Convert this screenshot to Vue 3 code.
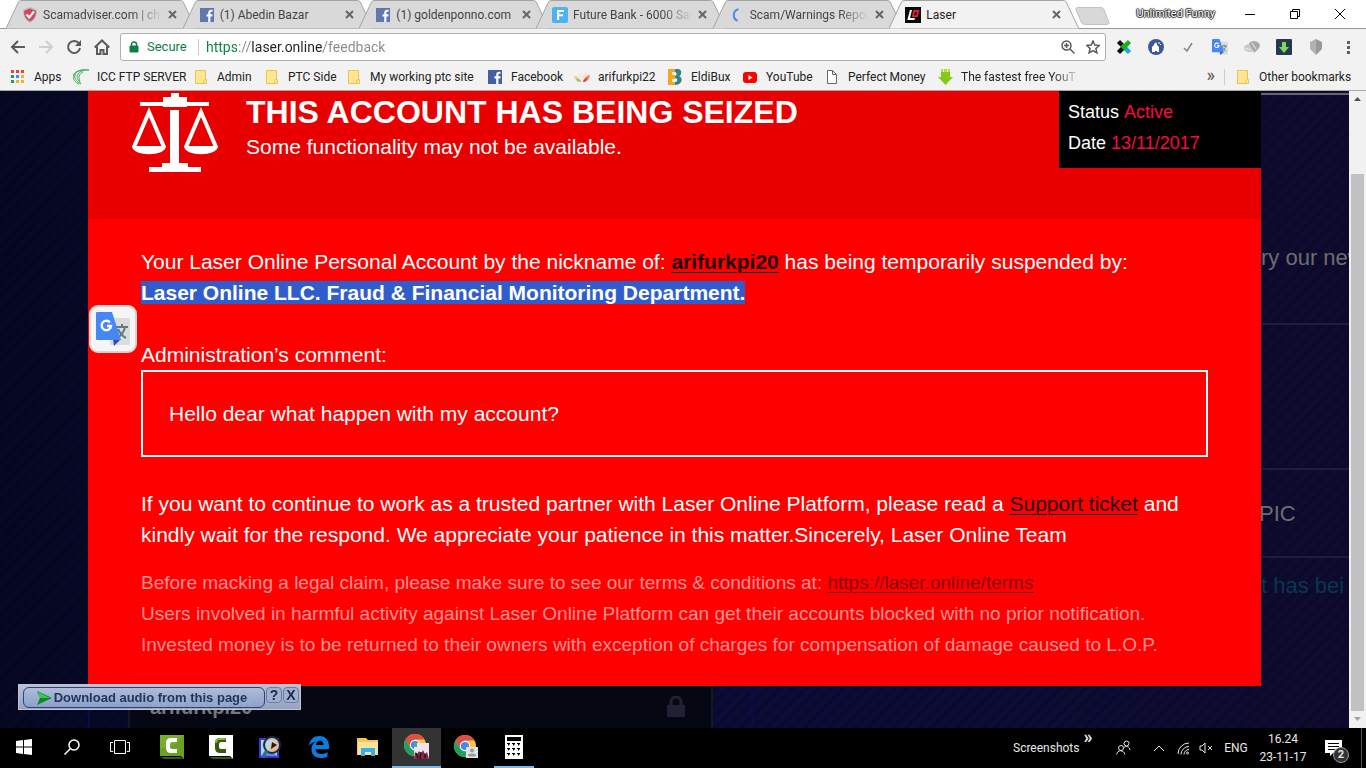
<script setup>
import { ref } from 'vue'

const address = ref('https://laser.online/feedback')

const tabs = [
  { icon: 'shield', title: 'Scamadviser.com | check', fade: true },
  { icon: 'facebook', title: '(1) Abedin Bazar' },
  { icon: 'facebook', title: '(1) goldenponno.com' },
  { icon: 'future', title: 'Future Bank - 6000 Sato', fade: true },
  { icon: 'loading', title: 'Scam/Warnings Report', fade: true },
  { icon: 'laser', title: 'Laser', active: true },
]

const bookmarks = [
  { icon: 'apps', title: 'Apps' },
  { icon: 'icc', title: 'ICC FTP SERVER' },
  { icon: 'folder', title: 'Admin' },
  { icon: 'folder', title: 'PTC Side' },
  { icon: 'folder', title: 'My working ptc site' },
  { icon: 'facebook', title: 'Facebook' },
  { icon: 'hands', title: 'arifurkpi22' },
  { icon: 'eldi', title: 'EldiBux' },
  { icon: 'youtube', title: 'YouTube' },
  { icon: 'page', title: 'Perfect Money' },
  { icon: 'arrow', title: 'The fastest free YouTu', fade: true },
]
</script>

<template>
  <div class="screen">
    <svg class="sprite" aria-hidden="true">
      <symbol id="shield" viewBox="0 0 16 16">
        <path d="M8 0 15 3C15 9 13 13 8 16 3 13 1 9 1 3Z" fill="#b9b3b3" />
        <path d="M8 1.500 14 4C14 9 12 12.500 8 14.600 4 12.500 2 9 2 4Z" fill="#d2233c" />
        <path d="m4.500 7.500 2.700 3L12 4.500" fill="none" stroke="#fff" stroke-width="2.200" />
      </symbol>
      <symbol id="facebook" viewBox="0 0 16 16">
        <path d="M1 1h14v14H1z" fill="#4460a0" />
        <path d="M9.200 15V9.400H7.500V7.200h1.700V5.700c0-2 1.100-3 2.900-3h1.500v2h-1.100c-.9 0-1.100.5-1.100 1.200v1.300h2.200l-.3 2.200h-1.900V15z" fill="#fff" />
      </symbol>
      <symbol id="future" viewBox="0 0 16 16">
        <rect width="16" height="16" rx="2" fill="#2aaaf5" />
        <path d="M5 3h7v2H7.200v2.200h4v2h-4V13H5z" fill="#fff" />
      </symbol>
      <symbol id="loading" viewBox="0 0 16 16">
        <path d="M9.500 2.300A6 6 0 0 0 8.700 13.800" fill="none" stroke="#2a75f0" stroke-width="2" />
      </symbol>
      <symbol id="laser" viewBox="0 0 16 16">
        <path d="M0 0h16v16H0z" fill="#080808" />
        <path d="M5 3h2L5 11h5l-.6 2H2.300z" fill="#fff" />
        <path d="M8.500 3h6l-1.800 7H6.800zm1.500 2-.9 3.200h2.200l.8-3.200z" fill="#e01f35" fill-rule="evenodd" />
      </symbol>
      <symbol id="apps" viewBox="0 0 16 16">
        <path d="M1 1h3v3H1zM6 1h3v3H6zM11 1h3v3h-3z" fill="#ee4135" />
        <path d="M1 6h3v3H1zM1 11h3v3H1z" fill="#219b59" />
        <path d="M6 6h3v3H6z" fill="#4285f4" />
        <path d="M11 6h3v3h-3zM6 11h3v3H6zM11 11h3v3h-3z" fill="#f5b51a" />
      </symbol>
      <symbol id="icc" viewBox="0 0 16 16">
        <path d="M16 1C9 0 3 2 2 6c-1 4 2 7 6 9C5 11 3 8 5 5c2-3 6-4 11-4M12 1C6 1 0 3 0 8c0 3 3 6 6 7M9 1C4 2 0 4 1 9M7 13C5 8 6 5 10 3" fill="none" stroke="#4bb45b" stroke-width="1" />
      </symbol>
      <symbol id="folder" viewBox="0 0 16 16">
        <path d="M2.500 1.500h10v9h1v4h-11z" fill="#ffe694" stroke="#e9c550" />
        <path d="M10.500 14.500v-2q0-2 2-2" fill="none" stroke="#e9c550" />
      </symbol>
      <symbol id="hands" viewBox="0 0 16 16">
        <path d="M0 7c3 0 6 2 7 5-4 1-6-1-7-5" fill="#ecc3ae" />
        <path d="M16 6c-3 0-5 2-7 6 4 1 6-1 7-6" fill="#f08060" />
        <path d="M4 3c3 1 4 5 4 9-3-2-4-5-4-9" fill="#e9efdd" />
        <path d="M12 3c-3 1-4 5-4 9 3-2 4-5 4-9" fill="#f0e4da" />
        <path d="M2 10c3 0 4 1 5 3-3 0-4-1-5-3" fill="#8fc04d" />
        <path d="M13 9c-2 0-3 1-4 4 3 0 4-1 4-4" fill="#e4432c" />
      </symbol>
      <symbol id="eldi" viewBox="0 0 16 16">
        <path d="M1 0h7v3H5v3h3v4H5v3h3v3H1z" fill="#f2a71d" />
        <path d="M8 0c5-1 7 2 6 4 0 2-1 3-2 3 4 1 4 9-4 9v-3c3 0 3-4 0-4V7c2 0 2-4 0-4z" fill="#36818c" />
      </symbol>
      <symbol id="youtube" viewBox="0 0 16 16">
        <rect x="1" y="3" width="14" height="11" rx="3" fill="#f00" />
        <path d="m6.500 6 4 2.500-4 2.500z" fill="#fff" />
      </symbol>
      <symbol id="page" viewBox="0 0 16 16">
        <path d="M3.500 1.500h5l4 4v9h-9zM8.500 1.500v4h4" fill="#fff" stroke="#666" />
      </symbol>
      <symbol id="arrow" viewBox="0 0 16 16">
        <path d="M4 0h2v6H4zM7 0h3v7H7zM11 0h2v6h-2z" fill="#b3e22c" />
        <path d="M4 3h9v5h3l-7.500 8L1 8h3z" fill="#84cb17" />
      </symbol>
      <symbol id="translate" viewBox="0 0 34 34">
        <rect x="14" y="6" width="20" height="27" rx="1" fill="#dcdcdc" />
        <path d="M20 15h12M26 12v3M21 26c5-3 7-6 8-11M22 17c2 4 4 7 8 9" fill="none" stroke="#607d7d" stroke-width="2" />
        <path d="m17 27 8 0-7 7z" fill="#3648b8" />
        <path d="M1 0h15l9 28H1q-1 0-1-1V1q0-1 1-1" fill="#4588f4" />
        <path d="M14 10.500A4.700 4.700 0 1 0 15 14h-4" fill="none" stroke="#fff" stroke-width="2.400" />
      </symbol>
      <symbol id="chrome" viewBox="0 0 22 22">
        <circle cx="11" cy="11" r="11" fill="#fbc43a" />
        <path d="M1.500 5.500A11 11 0 0 1 20.500 5.500H11l-4.800 8.300z" fill="#de4e42" />
        <path d="M1.500 5.500A11 11 0 0 0 11 22l4.800-8.300H6.200z" fill="#1aa15f" />
        <circle cx="11" cy="11" r="5.200" fill="#fff" />
        <circle cx="11" cy="11" r="4.100" fill="#4587f3" />
      </symbol>
    </svg>

    <header class="browser">
      <div class="tabstrip">
        <nav class="tabs" aria-label="Tabs">
          <div v-for="(tab, i) in tabs" :key="i" class="tab" :class="{ active: tab.active }">
            <svg class="tab-shape" viewBox="0 0 190 29" preserveAspectRatio="none" aria-hidden="true">
              <path d="M0 28.500 12 3Q13 .5 15 .5H175Q177 .5 178 3L190 28.500" />
            </svg>
            <svg class="ico"><use :href="'#' + tab.icon" /></svg>
            <a href="#" class="tab-title" :class="{ fade: tab.fade }">{{ tab.title }}</a>
            <button class="close" :aria-label="'Close ' + tab.title">
              <svg viewBox="0 0 9 9"><path d="m1 1 7 7M8 1 1 8" /></svg>
            </button>
          </div>
        </nav>
        <button class="newtab" aria-label="New tab">
          <svg viewBox="0 0 36 18"><path d="M3 .5h23q2 0 3 2l5 13q0 2-2 2H10q-3 0-4-3L1 3Q0 .5 3 .5" fill="#d8d8d8" stroke="#c2c2c2" /></svg>
        </button>
        <span class="profile">Unlimited Funny</span>
        <div class="winbtns">
          <button aria-label="Minimize"><svg viewBox="0 0 12 12"><path d="M1 6.500h10" /></svg></button>
          <button aria-label="Restore"><svg viewBox="0 0 12 12"><path d="M1.500 3.500h7v7h-7zM3.500 3V1.500h7v7H9" /></svg></button>
          <button aria-label="Close window"><svg viewBox="0 0 12 12"><path d="m1 1 10 10M11 1 1 11" /></svg></button>
        </div>
      </div>

      <div class="toolbar">
        <button class="tool" aria-label="Back"><svg viewBox="0 0 16 16"><path d="M15 8H2M8 2 2 8l6 6" /></svg></button>
        <button class="tool dim" aria-label="Forward"><svg viewBox="0 0 16 16"><path d="M1 8h13M8 2l6 6-6 6" /></svg></button>
        <button class="tool" aria-label="Reload"><svg viewBox="0 0 16 16"><path d="M13 4.500A6 6 0 1 0 14 9" /><path d="M15 1v6H9z" class="solid" /></svg></button>
        <button class="tool" aria-label="Home"><svg viewBox="0 0 16 16"><path d="M.7 8.500 8 1.500l7.300 7M3 7.500V15h3.500v-4h3v4H13V7.500" /></svg></button>
        <form class="omnibox" @submit.prevent>
          <svg class="lock" viewBox="0 0 10 12"><path d="M1 5h8v6H1z" fill="#0b8043" stroke="#0b8043" /><path d="M2.500 5V3.500a2.500 2.500 0 0 1 5 0V5" fill="none" stroke="#0b8043" stroke-width="1.500" /></svg>
          <label for="address">Secure</label>
          <input id="address" v-model="address" type="text" spellcheck="false" />
          <button type="button" aria-label="Zoom"><svg viewBox="0 0 14 14"><circle cx="5.500" cy="5.500" r="4.500" /><path d="m9 9 4.500 4.500M3 5.500h5M5.500 3v5" /></svg></button>
          <button type="button" aria-label="Bookmark this page"><svg viewBox="0 0 14 14"><path d="m7 1 1.800 4.100 4.400.4-3.300 3 1 4.400L7 10.600l-3.900 2.300 1-4.400-3.300-3 4.400-.4z" /></svg></button>
        </form>
        <div class="extensions">
          <button aria-label="Cross extension"><svg viewBox="0 0 16 16"><path d="m2.500 2.500 4 4M2.500 13.500 7 9" stroke="#111" stroke-width="4.500" /><path d="m9 9 4.500 4.500" stroke="#13a7ed" stroke-width="4.500" /><path d="m13.500 2.500-5 5M6 6l4 4" stroke="#12b312" stroke-width="4.500" /></svg></button>
          <button aria-label="Profile extension"><svg viewBox="0 0 16 16"><circle cx="8" cy="8" r="8" fill="#3b5998" /><path d="M4 13V8l2-2V4l1 1 1-2 1 2v1l2 2v5H9v-1H7v1z" fill="#fff" /><path d="M11 3v2M13 5l-1 1" stroke="#fff" /></svg></button>
          <button aria-label="Check extension"><svg viewBox="0 0 16 16"><path d="m4 9 3 3 5-8" fill="none" stroke="#888" stroke-width="1.500" /></svg></button>
          <button aria-label="Translate extension"><svg><use href="#translate" /></svg></button>
          <button aria-label="Download manager extension"><svg viewBox="0 0 16 16"><ellipse cx="6" cy="9" rx="6" ry="4" fill="#c8c8c8" /><path d="M5 4c3-3 9-3 11 2 0 2-2 5-6 8 0-4-4-5-5-10" fill="#aaa" /><path d="m1 9 6 2M8 4l4 6" stroke="#eee" /></svg></button>
          <button aria-label="Video downloader extension"><svg viewBox="0 0 16 16"><rect width="16" height="16" rx="1" fill="#263a4c" /><path d="M6 3h4v5h3l-5 6-5-6h3z" fill="#7bd765" /></svg></button>
          <button aria-label="Shield extension"><svg viewBox="0 0 16 16"><path d="m8 0 6 3v7l-6 6z" fill="#999" /><path d="M8 0 2 3v7l6 6z" fill="#b2b2b2" /></svg></button>
          <button aria-label="Browser menu"><svg viewBox="0 0 16 16"><path d="M7 2h3v3H7zM7 7h3v3H7zM7 12h3v3H7z" fill="#5f5f5f" /></svg></button>
        </div>
      </div>

      <nav class="bookmarks" aria-label="Bookmarks">
        <a v-for="b in bookmarks" :key="b.title" href="#"><svg class="ico"><use :href="'#' + b.icon" /></svg><span :class="{ fade: b.fade }">{{ b.title }}</span></a>
        <button class="more" aria-label="More bookmarks">»</button>
        <a href="#" class="other"><svg class="ico"><use href="#folder" /></svg><span>Other bookmarks</span></a>
      </nav>
    </header>

    <main class="viewport">
      <div class="site">
        <div class="account">
          <div class="account-field"><b>arifurkpi20</b>
            <svg viewBox="0 0 18 22"><path d="M0 9h18v12H0z" fill="#202134" /><path d="M4 9V6a5 5 0 0 1 10 0v3" fill="none" stroke="#202134" stroke-width="3" /></svg>
          </div>
        </div>
        <aside class="side">
          <p class="news">ry our new</p>
          <p class="blank"></p>
          <p class="topic">PIC</p>
          <p class="msg">t has bei</p>
        </aside>

        <section class="notice">
          <div class="notice-head">
            <svg class="scales" viewBox="0 0 86 79" aria-hidden="true">
              <path d="M39 0h8v4h8v5h22v4H55v1H31v-1H8V9h23V4h8zM38 17h9v53h9v4h13v5H17v-5h13v-4h8z" fill="#fff" />
              <path d="M2 54 17 19l15 35M54 54l15-35 15 35" fill="none" stroke="#fff" stroke-width="4" />
              <path d="M0 53h34c0 11-34 11-34 0M52 53h34c0 11-34 11-34 0" fill="#fff" />
            </svg>
            <div class="heading">
              <h1>THIS ACCOUNT HAS BEING SEIZED</h1>
              <p>Some functionality may not be available.</p>
            </div>
            <dl class="status">
              <div><dt>Status</dt> <dd>Active</dd></div>
              <div><dt>Date</dt> <dd>13/11/2017</dd></div>
            </dl>
          </div>
          <div class="notice-body">
            <p>Your Laser Online Personal Account by the nickname of: <a href="#"><b>arifurkpi20</b></a> has being temporarily suspended by:<br><mark>Laser Online LLC. Fraud &amp; Financial Monitoring Department.</mark></p>
            <p class="comment-label">Administration’s comment:</p>
            <blockquote>Hello dear what happen with my account?</blockquote>
            <p class="reply">If you want to continue to work as a trusted partner with Laser Online Platform, please read a <a href="#">Support ticket</a> and<br>kindly wait for the respond. We appreciate your patience in this matter.Sincerely, Laser Online Team</p>
            <p class="fine">Before macking a legal claim, please make sure to see our terms &amp; conditions at: <a href="#">https://laser.online/terms</a><br>Users involved in harmful activity against Laser Online Platform can get their accounts blocked with no prior notification.<br>Invested money is to be returned to their owners with exception of charges for compensation of damage caused to L.O.P.</p>
          </div>
        </section>

        <button class="translate" aria-label="Translate selection"><svg><use href="#translate" /></svg></button>

        <div class="audio">
          <button class="dl"><svg viewBox="0 0 15 14"><path d="m0 0 15 7L0 14l3-7z" fill="#128c2b" /><path d="m1 1 12 6H3z" fill="#35d94c" /></svg>Download audio from this page</button>
          <button class="mini">?</button>
          <button class="mini">X</button>
        </div>
      </div>

      <div class="scrollbar" aria-hidden="true">
        <svg viewBox="0 0 17 17"><path d="m5 10 3.500-4L12 10z" fill="#505050" /></svg>
        <div class="track"><div class="thumb"></div></div>
        <svg viewBox="0 0 17 17"><path d="m5 6 3.500 4L12 6z" fill="#a3a3a3" /></svg>
      </div>
    </main>

    <footer class="taskbar">
      <div class="pinned">
        <button class="sys" aria-label="Start"><svg width="16" height="16" viewBox="0 0 16 16"><path d="m0 2 7-1v6.500H0zM8 1l8-1v7.500H8zM0 8.500h7V15l-7-1zM8 8.500h8V16l-8-1z" fill="#fff" /></svg></button>
        <button class="sys" aria-label="Search"><svg width="16" height="16" viewBox="0 0 16 16"><circle cx="10" cy="6" r="5" fill="none" stroke="#fff" stroke-width="1.500" /><path d="m6.500 9.500-6 6" stroke="#fff" stroke-width="1.500" /></svg></button>
        <button class="sys" aria-label="Task view"><svg width="20" height="14" viewBox="0 0 20 14"><path d="M4.500.5h11v13h-11zM3 2.500H.5v9H3M17 2.500h2.500v9H17" fill="none" stroke="#fff" /></svg></button>
        <button aria-label="Camtasia"><svg width="24" height="24" viewBox="0 0 24 24"><path d="M0 0h24v24l-3-3H0z" fill="#6aa122" /><path d="M0 22h21l3 2H4z" fill="#35590d" /><path d="M0 0h24L14 10 0 14z" fill="#82b93b" opacity=".5" /><path d="M17 3v4h-5q-2 0-2 2v3q0 2 2 2h5v4h-6q-5 0-5-5V8q0-5 5-5z" fill="#fff" /></svg></button>
        <button aria-label="Camtasia recorder"><svg width="24" height="24" viewBox="0 0 24 24"><path d="M0 0h24v24l-3-3H0z" fill="#fff" /><path d="M0 22h21l3 2H4z" fill="#35590d" /><path d="M17 3v4h-5q-2 0-2 2v3q0 2 2 2h5v4h-6q-5 0-5-5V8q0-5 5-5z" fill="#35590d" /><path d="M6 8q0-5 5-5h6l-1 2h-5q-3 0-3 3z" fill="#83bb31" /></svg></button>
        <button aria-label="Image viewer"><svg width="22" height="24" viewBox="0 0 22 24"><path d="M1 4h18v18H1z" fill="#a5dcf5" stroke="#3b38d0" stroke-width="2" /><path d="m2 21 6-9 10 9z" fill="#5f8fd0" /><circle cx="13" cy="10" r="8" fill="#e8bd96" stroke="#182c4a" stroke-width="2" /><path d="M7 8q4-6 11-1-6 0-9 9-3-4-2-8z" fill="#b9d9e4" /><path d="m13 7 5 3-6 4z" fill="#2b1712" /><path d="m8 16-4 6" stroke="#2d6f9c" stroke-width="3" /></svg></button>
        <button aria-label="Edge"><svg width="20" height="22" viewBox="0 0 20 22"><path d="M0 10C1 3 5 0 10.500 0 17 0 20 5 20 10v3H6.500c0 4 3 5 6 5 2.500 0 4.500-1 6-2v4.500c-2 1-4.500 1.500-7 1.500-6 0-9-4-9-8.500C2.500 9 5 6.500 7.500 5.500 3.500 6 1 8 0 10m7-1h7.500c0-3-1.300-4.500-3.500-4.500S7.300 6 7 9" fill="#0a7de0" fill-rule="evenodd" /></svg></button>
        <button aria-label="File Explorer"><svg width="21" height="18" viewBox="0 0 21 18"><path d="M0 0h9l2 2h10v15H0z" fill="#f4c752" /><path d="M1 4h20v13H1z" fill="#fbe29a" /><path d="M4 18v-8h14v8h-4v-4H8v4z" fill="#38aeea" /></svg></button>
        <button class="current" aria-label="Chrome"><svg width="26" height="26" viewBox="0 0 26 26"><use href="#chrome" width="22" height="22" /><path d="M10 9h15v16H10z" fill="#efe4ee" /><path d="m10 25 1-7 2 2 2-3 2 3 2-4 2 4 2-2 2 7z" fill="#82264c" /><path d="m12 19 2 5M17 18l-1 7M21 20v4" stroke="#2a0f20" stroke-width="1.500" /><path d="M10 9h3v4h-3z" fill="#4ab36b" /></svg></button>
        <button aria-label="Chrome profile"><svg width="24" height="24" viewBox="0 0 24 24"><use href="#chrome" width="22" height="22" /><path d="M12 12h12v11H12z" fill="#e2e2e2" /><circle cx="18" cy="15.500" r="2" fill="#999" /><ellipse cx="18" cy="20" rx="4" ry="1.500" fill="#999" /></svg></button>
        <button class="open" aria-label="Calculator"><svg width="18" height="24" viewBox="0 0 18 24"><path d="M0 0h18v24H0z" fill="#fff" /><path d="M2 2h14v4H2zM2 8h3v1l-2 2V9H2zM7 8h3v1l-2 2V9H7zM12 8h3v1l-2 2V9h-1zM2 13h3v1l-2 2v-2H2zM7 13h3v1l-2 2v-2H7zM12 13h3v1l-2 2v-2h-1zM2 18h3v1l-2 2v-2H2zM7 18h3v1l-2 2v-2H7zM12 18h3v1l-2 2v-2h-1z" fill="#000" /></svg></button>
      </div>
      <div class="tray">
        <span class="shots">Screenshots</span>
        <button class="chev" aria-label="More toolbar items">»</button>
        <button class="people" aria-label="People"><svg width="15" height="16" viewBox="0 0 15 16"><circle cx="10.500" cy="3.500" r="2.500" /><circle cx="5" cy="8" r="2.500" /><path d="M.8 14.500C1 9.500 8 9.500 9 14.500M8 7.500c2-2 5.500-1 6 2.500" /></svg></button>
        <button class="up" aria-label="Hidden icons"><svg width="12" height="7" viewBox="0 0 12 7"><path d="m1 6 5-5 5 5" /></svg></button>
        <button class="wifi" aria-label="Network"><svg width="13" height="13" viewBox="0 0 13 13"><path d="M1 12A11 11 0 0 1 12 1M4 12.500a8 8 0 0 1 8-8M7 12.500a5 5 0 0 1 5-5" /><circle cx="10.500" cy="11" r="1" /></svg></button>
        <button class="sound" aria-label="Volume"><svg width="15" height="12" viewBox="0 0 15 12"><path d="M1 4h2l3-3v10L3 8H1zM9 4l4 4M13 4 9 8" /></svg></button>
        <span class="lang">ENG</span>
        <time><span>16.24</span><span>23-11-17</span></time>
        <button class="notif" aria-label="Notifications"><svg width="17" height="16" viewBox="0 0 17 16"><path d="M0 0h17v13H8l-3 3v-3H0z" fill="#fff" stroke="none" /><path d="M3 3.500h11M3 6.500h11M3 9.500h7" stroke="#000" /></svg><b>2</b></button>
      </div>
    </footer>
  </div>
</template>

<style>
html, body, #app { height: 100%; }
body { margin: 0; overflow: hidden; }
</style>

<style scoped>
* { box-sizing: border-box; }
.screen { display: flex; flex-direction: column; height: 100vh; overflow: hidden; font-family: Roboto, "Open Sans", sans-serif; font-size: 12px; color: #222; background: #000; }
.sprite { display: none; }
button { border: 0; padding: 0; margin: 0; background: none; font: inherit; color: inherit; display: flex; align-items: center; justify-content: center; }
a { color: inherit; text-decoration: none; }
.ico { width: 16px; height: 16px; flex: none; }
.fade { -webkit-mask-image: linear-gradient(to right, #000 75%, transparent); mask-image: linear-gradient(to right, #000 75%, transparent); }

.browser { flex: none; background: #f2f2f2; border-bottom: 1px solid #a9a9a9; }
.tabstrip { display: flex; height: 29px; padding-left: 6px; background: linear-gradient(#fff 28px, #999 28px); }
.tabs { display: flex; flex: 0 1 1060px; min-width: 0; }
.tab { position: relative; flex: 1 1 0; min-width: 0; display: flex; align-items: center; gap: 5px; padding: 0 4px 0 16px; color: #444; }
.tab-shape { position: absolute; left: 0; top: 0; width: calc(100% + 13px); height: 29px; fill: #d9d9d9; stroke: #a3a3a3; }
.tab.active { z-index: 1; color: #222; }
.tab.active .tab-shape { fill: #f2f2f2; }
.tab .ico { position: relative; opacity: .8; }
.tab.active .ico { opacity: 1; }
.tab-title { position: relative; flex: 1; min-width: 0; overflow: hidden; white-space: nowrap; line-height: 20px; }
.close { position: relative; width: 12px; height: 12px; }
.close svg { width: 9px; height: 9px; stroke: #666; stroke-width: 2; fill: none; }
.newtab { margin-left: 9px; width: 36px; flex: none; align-items: flex-start; padding-top: 7px; }
.newtab svg { width: 36px; height: 18px; }
.profile { margin-left: auto; padding-top: 5px; font-size: 11px; line-height: 18px; color: #fff; text-shadow: 1px 0 1px #222, -1px 0 1px #222, 0 1px 1px #222, 0 -1px 1px #222; white-space: nowrap; }
.winbtns { display: flex; margin: 0 4px 0 12px; }
.winbtns button { width: 45px; height: 27px; }
.winbtns svg { width: 12px; height: 12px; fill: none; stroke: #000; }

.toolbar { display: flex; align-items: center; height: 36px; padding: 0 2px 0 4px; }
.tool { width: 28px; height: 28px; }
.tool svg { width: 16px; height: 16px; fill: none; stroke: #5a5a5a; stroke-width: 2; }
.tool .solid { fill: #5a5a5a; stroke: none; }
.tool.dim svg { stroke: #cfcfcf; }
.omnibox { flex: 1; display: flex; align-items: center; height: 28px; margin-left: 4px; padding: 0 0 0 8px; background: #fff; border: 1px solid #b0b0b0; border-radius: 3px; }
.lock { width: 10px; height: 12px; margin-right: 8px; }
.omnibox label { color: #0b8043; font-size: 13px; line-height: 16px; width: 52px; border-right: 1px solid #ccc; }
.omnibox input { flex: 1; min-width: 0; height: 24px; margin-left: 7px; padding: 0; border: 0; outline: 0; font: inherit; font-size: 14px; color: transparent; background: linear-gradient(to right, #0b8043 31px, #888 31px, #888 46px, #222 46px, #222 117px, #888 117px); -webkit-background-clip: text; background-clip: text; }
.omnibox button { width: 25px; height: 24px; }
.omnibox button svg { width: 14px; height: 14px; fill: none; stroke: #5a5a5a; stroke-width: 1.500; }
.extensions { display: flex; margin-left: 2px; }
.extensions button { width: 32px; height: 28px; }
.extensions button svg { width: 16px; height: 16px; }

.bookmarks { display: grid; grid-template-columns: 63px 120px 71px 82px 141px 87px 93px 75px 82px 113px 139px 1fr 142px; height: 25px; padding: 0 0 3px 10px; align-items: center; color: #222; }
.bookmarks a { display: flex; align-items: center; gap: 8px; white-space: nowrap; overflow: hidden; }
.bookmarks .more { justify-self: end; padding: 0 9px 3px 0; font-size: 18px; line-height: 20px; color: #555; }
.bookmarks .other { padding-left: 10px; border-left: 1px solid #ccc; }

.viewport { flex: 1; min-height: 0; display: flex; }
.site { position: relative; flex: 1; min-width: 0; overflow: hidden; display: flex; justify-content: space-between; font-family: "Liberation Sans", Arial, sans-serif; font-size: 21px; line-height: 31px;
  background: repeating-linear-gradient(135deg, rgba(0, 0, 0, .16) 0 4px, transparent 4px 9px), linear-gradient(to right, #060824 0%, #0b0b3a 45%, #0c0c36 75%, #0f0b30 100%); }
.site p, .site h1, .site dl, .site dd, .site blockquote { margin: 0; }
.account { align-self: flex-end; flex: 0 0 665px; margin-left: 88px; padding: 0 38px; border: solid #0b0b4a; border-width: 0 2px; }
.account-field { display: flex; justify-content: space-between; align-items: center; height: 42px; padding: 0 26px 0 20px; background: #050812; border: solid #151726; border-width: 0 2px; color: #777; font-size: 20px; }
.account-field svg { width: 18px; height: 22px; }
.side { flex: 0 0 88px; padding-top: 2px; color: #6d6d70; font-size: 22px; white-space: nowrap; overflow: hidden; }
.side p { border-bottom: 2px solid #201d3c; overflow: hidden; }
.side .news { height: 232px; border-top: 2px solid #66666c; padding-top: 147px; }
.side .blank { height: 145px; }
.side .topic { height: 88px; padding-top: 28px; text-indent: -2px; }
.side .msg { padding-top: 12px; border: 0; color: #0a3550; }

.notice { position: absolute; left: 88px; right: 88px; top: 0; color: #fff; background: #f00; }
.notice-head { display: flex; height: 128px; padding-left: 44px; background: #e80000; }
.scales { width: 86px; height: 79px; margin-top: 2px; flex: none; }
.heading { margin-left: 28px; padding-top: 2px; white-space: nowrap; }
.heading h1 { font-size: 32px; line-height: 38px; }
.status { width: 202px; height: 77px; margin-left: auto !important; padding: 6px 9px; background: #000; font-size: 18px; }
.status dt, .status dd { display: inline; }
.status dd { color: #fc0a3c; }
.notice-body { padding: 27px 53px 26px; white-space: nowrap; }
.notice-body a { color: #1f0000; text-decoration: underline; text-underline-offset: 3px; text-decoration-thickness: 1px; }
mark { color: #fff; background: #315dcc; font-weight: bold; }
.notice-body .comment-label { margin-top: 31px; }
.notice-body blockquote { padding: 26px; border: 2px solid #fff; }
.notice-body .reply { margin-top: 31px; }
.notice-body .fine { margin-top: 17px; font-size: 19px; color: #ff9090; }
.notice-body .fine a { color: #850000; }

.translate { position: absolute; left: 89px; top: 214px; width: 48px; height: 48px; background: #f5f5f5; border: 2px solid #d5d5d5; border-radius: 9px; }
.translate svg { width: 34px; height: 34px; }
.audio { position: absolute; left: 18px; bottom: 18px; display: flex; align-items: flex-start; gap: 1px; height: 26px; padding: 2px 1px 0 4px; background: linear-gradient(#c3cbe2, #9fabc9); border: 1px solid #c9cede; opacity: .95; }
.audio .dl { height: 21px; width: 242px; gap: 2px; padding-right: 4px; border: 1px solid #33456f; border-radius: 6px; background: linear-gradient(#b9c6e4, #94a9d4); color: #27365f; font-size: 13px; line-height: 18px; font-weight: bold; white-space: nowrap; }
.audio .dl svg { width: 15px; height: 14px; }
.audio .mini { width: 16px; height: 16px; border: 1px solid #7383a5; border-radius: 4px; background: #a9b9da; color: #1c2b4d; font-size: 14px; line-height: 14px; font-weight: bold; }

.scrollbar { flex: 0 0 17px; display: flex; flex-direction: column; background: #f1f1f1; }
.scrollbar svg { width: 17px; height: 17px; flex: none; }
.track { flex: 1; display: flex; flex-direction: column; justify-content: flex-end; padding: 0 2px; }
.thumb { height: 89%; background: #c1c1c1; }

.taskbar { flex: none; display: flex; justify-content: space-between; height: 40px; background: #000; color: #e8e8e8; }
.pinned { display: flex; }
.pinned button { width: 49px; height: 40px; border-bottom: 2px solid transparent; }
.pinned button.sys { width: 48px; }
.pinned .sys + button:not(.sys) { margin-left: 3px; }
.pinned button.current { background: #333; border-bottom-color: #76b9ed; }
.pinned button.open { width: 40px; margin-left: 4px; border-bottom-color: #76b9ed; }
.tray { display: flex; align-items: center; }
.tray button svg { fill: none; stroke: #e8e8e8; flex: none; }
.shots { width: 64px; }
.chev { width: 22px; align-self: flex-start; font-size: 18px; line-height: 18px; font-weight: 700; }
.people { width: 48px; }
.up { width: 24px; }
.wifi { width: 25px; }
.sound { width: 21px; }
.lang { width: 38px; text-align: center; }
time { display: flex; flex-direction: column; width: 56px; text-align: center; line-height: 18px; }
.notif { position: relative; width: 51px; height: 40px; margin-right: 4px; padding-right: 5px; border-right: 1px solid #555; }
.notif b { position: absolute; right: 12px; top: 19px; width: 16px; height: 16px; border: 1px solid #999; border-radius: 50%; background: #333; font-size: 11px; line-height: 14px; }
</style>
